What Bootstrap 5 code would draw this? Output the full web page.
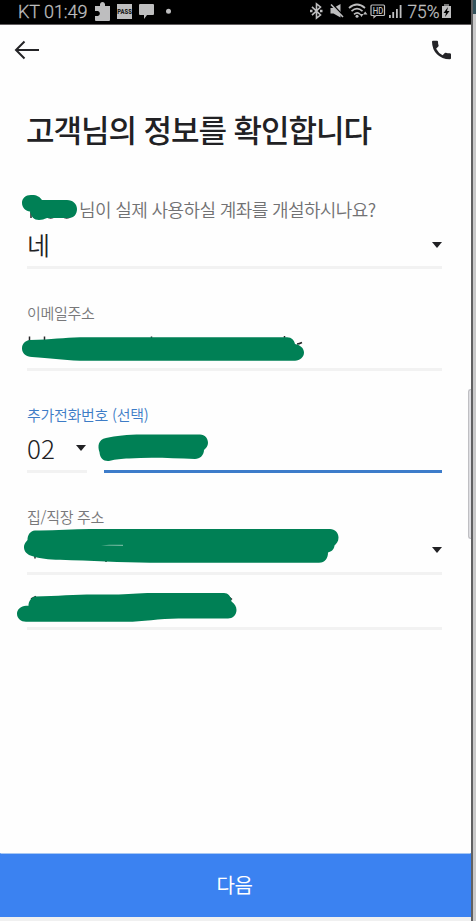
<!DOCTYPE html>
<html lang="ko">
<head>
<meta charset="utf-8">
<meta name="viewport" content="width=device-width, initial-scale=1">
<title>고객 정보 확인</title>
<link href="https://cdn.jsdelivr.net/npm/bootstrap@5.3.0/dist/css/bootstrap.min.css" rel="stylesheet">
<style>
body{font-family:"Noto Sans CJK KR",sans-serif;background:#fefefe;color:#212124;width:476px;height:921px;overflow:hidden}
.phone{width:471px;height:921px;background:#fefefe}
.rim{width:2px;background:#606062}
.desk{width:3px;background:linear-gradient(#34535d 0 14px,#c9c9ca 14px)}
.status{height:25px;background:#000;border-bottom:1px solid #625e60;color:#bebebf;font:18px/24px Roboto,sans-serif;padding-left:18px}
.status svg{display:block}
.clock{width:76px;letter-spacing:-.05px;font-weight:300;-webkit-text-stroke:.3px}
.appbar{height:50px;padding:0 17px 0 13px}
.heading{height:112px;padding:34px 0 0 26px;font-size:31px;line-height:40px;font-weight:500;letter-spacing:-1.05px;margin:0}
.form-area{padding:0 29px 0 27px}
.question{height:42px;font-size:18px;line-height:26px;padding:9px 0 0 52px;color:#717173;letter-spacing:-.62px;font-weight:350}
.line{border-bottom:3px solid #f2f2f2}
.value{font-size:25px;font-weight:350;padding-bottom:5px}
.r1{height:40px}.r2{height:43px}.r3{height:43px}.r4{height:43px;padding-bottom:5px}.r5{height:55px}
.cap{font-size:15px;line-height:22px;color:#78787a;letter-spacing:-.28px;font-weight:350}
.c1{height:59px;padding-top:33px}
.c2{height:59px;padding-top:33px}
.c3{height:59px;padding-top:33px}
.code{width:60px;font:300 26px/36px "Noto Sans CJK KR",sans-serif;padding:0 1px 4px 0}
.number{width:338px;border-bottom:3px solid #3d7cca}
.caret{width:0;height:0;border:5px solid transparent;border-top:6px solid #212124;border-bottom:0}
.next{height:64px;background:#3b82f1;border-top:1px solid #a7c7f3;border-radius:0;color:#fff;font-size:20px;letter-spacing:-.4px;padding:0 2px 1px 0}
.foot{height:4px;background:#f0f0f0}
.edge-handle{left:468px;top:389px;width:3px;height:150px;border:1px solid #bfbfc3;border-right:0;border-radius:4px 0 0 4px;background:#dedee2}
</style>
<script src="https://cdn.jsdelivr.net/npm/bootstrap@5.3.0/dist/js/bootstrap.bundle.min.js"></script>
</head>
<body class="position-relative d-flex">
<main class="phone d-flex flex-column">
  <div class="status d-flex flex-shrink-0">
    <span class="clock text-nowrap">KT 01:49</span>
    <svg width="377" height="24" viewBox="94 0 377 24" fill="#bebebf">
      <path d="M95 6h5V4a2.6 2.6 0 0 1 5 0v2h5v14q0 1-1 1H96q-1 0-1-1v-4h3a2.6 2.6 0 0 0 0-5h-3z"/>
      <rect x="117" y="4" width="15" height="15"/>
      <text x="117.3" y="14.3" font-family="Roboto" font-size="7.2" font-weight="900" fill="#222" textLength="14.6" lengthAdjust="spacingAndGlyphs">PASS</text>
      <path d="M140 4h13q1 0 1 1v9q0 1-1 1h-6l-3 4v-4h-4q-1 0-1-1V5q0-1 1-1z"/>
      <circle cx="168.5" cy="11.3" r="2.5"/>
      <g fill="none" stroke="#bebebf" stroke-width="1.6"><path d="M312 6.800l8.500 8.200-4 3.200V3.800l4 3.200-8.500 8.200"/><path d="M310 11h2.500m7.500 0h2.500" stroke-width="2.300"/></g>
      <path d="M330.500 8h3l7-4v13.500l-7-4h-3z"/><path d="M331 3l13 14" stroke="#000" stroke-width="2"/><path d="M331 4.500l12 12.500" stroke="#bebebf" stroke-width="1.600"/>
      <g fill="none" stroke="#bebebf" stroke-width="1.700"><path d="M349 8q8-7 16 0M351.500 11.200q5.500-5 11 0M354 14.300q3.500-3 6 0"/></g>
      <circle cx="357" cy="16.200" r="1.500"/><path d="M359.500 14l2 3 2-3zM363 14.500l2.200-3 2.200 3z"/>
      <path d="M372 5h11.500q1 0 1 1v8.500q0 1-1 1H376l-2 1.800v-1.800h-2q-1 0-1-1V6q0-1 1-1z" fill="none" stroke="#bebebf" stroke-width="1.200"/>
      <text x="372.700" y="13.600" font-family="Roboto" font-size="9" font-weight="500" textLength="10.500" lengthAdjust="spacingAndGlyphs">HD</text>
      <path d="M389 15h1.800v3H389zM392.300 12h1.800v6h-1.800zM396 9h1.800v9H396zM399.700 5h1.800v13h-1.800z"/>
      <text x="407.500" y="18.300" font-family="Roboto" font-size="18.500" font-weight="300" stroke="#bebebf" stroke-width=".3" textLength="32" lengthAdjust="spacingAndGlyphs">75%</text>
      <path d="M444 4h5v2h-5z" fill="#777"/><path d="M442 6h9v12h-9z"/><path d="M448 7l-4.500 6h2.500l-1 4 4.500-6H447z" fill="#000"/>
    </svg>
  </div>
  <header class="appbar d-flex justify-content-between flex-shrink-0">
    <svg width="30" height="50" viewBox="13 25 30 50" fill="none" stroke="#242427" stroke-width="2"><path d="M39 50H16M24.500 41.500L16 50l8.500 8.500"/></svg>
    <svg width="24" height="50" viewBox="430 25 24 50" fill="#242427"><path transform="translate(-.5 -.3)" d="M433.500 41h4q1 0 1 1 0 2 .6 3.700.2.600-.3 1.100l-2.200 2.200q2.400 4.400 6.500 6.500l2.200-2.200q.5-.5 1.100-.3 1.800.6 3.700.600 1.400 0 1.400 1v4q0 1-1.400 1-7.700-.2-12.600-5.100T432.500 42q0-1 1-1z"/></svg>
  </header>
  <h1 class="heading flex-shrink-0 text-nowrap">고객님의 정보를 확인합니다</h1>
  <form class="form-area">
    <div class="question text-nowrap">님이 실제 사용하실 계좌를 개설하시나요?</div>
    <div class="r1 line value d-flex align-items-center justify-content-between"><span>네</span><i class="caret"></i></div>
    <div class="cap c1">이메일주소</div>
    <div class="r2 line"></div>
    <div class="cap c2" style="color:#3d7cc6">추가전화번호 (선택)</div>
    <div class="r3 d-flex justify-content-between">
      <div class="code line d-flex align-items-center justify-content-between"><span>02</span><i class="caret"></i></div>
      <div class="number"></div>
    </div>
    <div class="cap c3">집/직장 주소</div>
    <div class="r4 line d-flex align-items-center justify-content-end"><i class="caret"></i></div>
    <div class="r5 line"></div>
  </form>
  <button class="next btn w-100 mt-auto flex-shrink-0" type="button">다음</button>
  <div class="foot flex-shrink-0"></div>
</main>
<div class="rim"></div><div class="desk"></div>
<div class="edge-handle position-absolute"></div>
<svg class="position-absolute top-0 start-0 pe-none" width="476" height="921" viewBox="0 0 476 921" fill="#008055">
  <g stroke="#28282a" stroke-width="1.500" fill="none"><path d="M31 212v6M46 216q5 4 9 0M62 216q5 4 9 0M29.500 336.500v5M44.500 336.500v5M151.500 336.500v3M284.500 336v4M297 344q2 0 5-1.500M35 555v3.500M106 559v3M31 599l5-2.500M229 597l3 2.500"/></g>
  <path d="M32 195C26 194.500 22 198 22 203c0 5 4 8 8 8.500 1 5 4 8.500 9 8.500 3 0 5-1 8-2h22c5 0 8-4 8-9 0-5-4-9-10-9H42c-2-3-5-5-10-5z"/>
  <path d="M30 340c22-.5 34-2.200 50-2.700h207c5 0 7 3 8 6.700 5 1 9 4 9 8.500s-4 8.200-9 8.200H80c-18-.7-30-2.700-48-3.700-6 0-10-4-10-8.500s3-8 8-8.500z"/>
  <path d="M106 438c10-2 21-3.500 36-3.500h58c5 0 8 4 8 8.500 0 3-2 5-4 7 0 5-4 9-9 9-24-1-46-2-66-.5-8 0-13 1-19 2.200-6 1-10-2-10.500-8.500-2-6-1.500-12.500 6.500-14.200z"/>
  <path d="M35 530.500c18 .3 37-1.200 55-1.500h240c5 0 8.500 4 8.500 8.500 0 4-2 6-4 8-.5 4-3 6-6.500 7 0 6-3 10.200-9 10.200H150c-28-.3-60-2-90-3-12 0-20-1-28-3.700-4-1-8-4-8-8.500 0-4 2-5.500 3.500-7.500 0-5 2.500-9 7.500-9.500z"/>
  <path d="M101 545.500l8-.7h14v1.200z" fill="#70b79e"/>
  <path d="M35 596.500c22-.5 40-2 59-2h19c16-.2 24-1.500 40-1.500h71c4 0 7 3 7.500 8.500 3 2 5 5 5 8.500 0 5-4 8.500-8.500 8.500h-48c-19-.2-38 3.300-53 3.300H26c-5 0-9-3.500-9-8s4-7.800 9-8h2.500c0-4 2-8 6.500-9.300z"/>
</svg>
</body>
</html>
